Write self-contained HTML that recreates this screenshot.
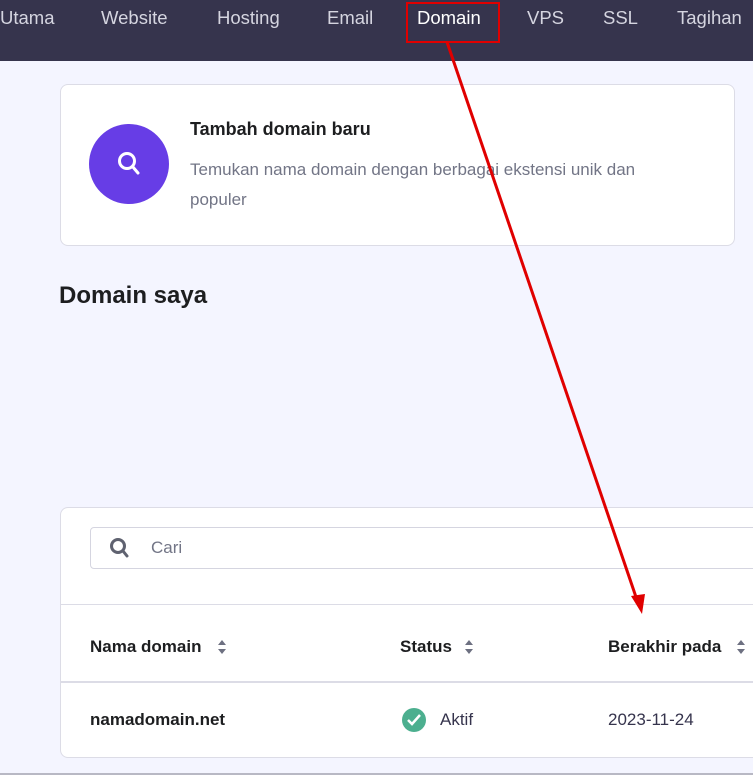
<!DOCTYPE html><html><head><style>
body{margin:0;width:753px;height:775px;background:#f4f5ff;font-family:"Liberation Sans",sans-serif;position:relative;overflow:hidden}
.nav{position:absolute;left:0;top:0;width:753px;height:61px;background:#36344d}
.nav span{position:absolute;top:7px;font-size:18.5px;color:#d5d5e0}
.abs{position:absolute}
</style></head><body>
<div class="nav">
<span style="left:0">Utama</span><span style="left:101px">Website</span><span style="left:217px">Hosting</span><span style="left:327px">Email</span><span style="left:417px;color:#fff">Domain</span><span style="left:527px">VPS</span><span style="left:603px">SSL</span><span style="left:677px">Tagihan</span>
</div>
<div class="abs" style="left:406px;top:2px;width:90px;height:37px;border:2px solid #e00000"></div>
<div class="abs" style="left:60px;top:84px;width:673px;height:160px;background:#fff;border:1px solid #dcdce6;border-radius:8px"></div>
<div class="abs" style="left:89px;top:124px;width:80px;height:80px;border-radius:50%;background:#673de6"></div>
<svg class="abs" style="left:111px;top:146px" width="36" height="36" viewBox="0 0 36 36"><circle cx="16" cy="15" r="7.5" fill="none" stroke="#fff" stroke-width="3"/><line x1="21.5" y1="20.5" x2="27" y2="27" stroke="#fff" stroke-width="3" stroke-linecap="round"/></svg>
<div class="abs" style="left:190px;top:119px;font-size:18px;font-weight:bold;color:#1d1e20">Tambah domain baru</div>
<div class="abs" style="left:190px;top:155px;width:490px;font-size:17px;line-height:30px;color:#727586">Temukan nama domain dengan berbagai ekstensi unik dan populer</div>
<div class="abs" style="left:59px;top:282px;font-size:24px;font-weight:bold;color:#1d1e20">Domain saya</div>
<div class="abs" style="left:60px;top:507px;width:700px;height:249px;background:#fff;border:1px solid #dcdce6;border-radius:8px"></div>
<div class="abs" style="left:90px;top:527px;width:680px;height:40px;border:1px solid #d5d5e0;border-radius:4px"></div>
<svg class="abs" style="left:107px;top:535px" width="26" height="26" viewBox="0 0 26 26"><circle cx="11" cy="11" r="6.5" fill="none" stroke="#5f6270" stroke-width="3"/><line x1="16" y1="16" x2="20" y2="21" stroke="#5f6270" stroke-width="3" stroke-linecap="round"/></svg>
<div class="abs" style="left:151px;top:538px;font-size:17px;color:#727586">Cari</div>
<div class="abs" style="left:61px;top:604px;width:700px;height:1px;background:#dcdce6"></div>
<div class="abs" style="left:61px;top:681px;width:700px;height:2px;background:#dcdce6"></div>
<div class="abs" style="left:90px;top:637px;font-size:17px;font-weight:bold;color:#1d1e20">Nama domain</div>
<div class="abs" style="left:400px;top:637px;font-size:17px;font-weight:bold;color:#1d1e20">Status</div>
<div class="abs" style="left:608px;top:637px;font-size:17px;font-weight:bold;color:#1d1e20">Berakhir pada</div>
<svg class="abs" style="left:217px;top:639px" width="10" height="16"><path d="M1 6L5 1 9 6Z M1 10L5 15 9 10Z" fill="#6d7081"/></svg>
<svg class="abs" style="left:464px;top:639px" width="10" height="16"><path d="M1 6L5 1 9 6Z M1 10L5 15 9 10Z" fill="#6d7081"/></svg>
<svg class="abs" style="left:736px;top:639px" width="10" height="16"><path d="M1 6L5 1 9 6Z M1 10L5 15 9 10Z" fill="#6d7081"/></svg>
<div class="abs" style="left:90px;top:710px;font-size:17px;font-weight:bold;color:#1d1e20">namadomain.net</div>
<svg class="abs" style="left:401px;top:707px" width="26" height="26"><circle cx="13" cy="13" r="12" fill="#4caf8f"/><path d="M7 13l4 4 8-9" fill="none" stroke="#fff" stroke-width="2.5"/></svg>
<div class="abs" style="left:440px;top:710px;font-size:17px;color:#36344d">Aktif</div>
<div class="abs" style="left:608px;top:710px;font-size:17px;color:#36344d">2023-11-24</div>
<div class="abs" style="left:0;top:773px;width:753px;height:2px;background:#b8b8c4"></div>
<svg class="abs" style="left:0;top:0" width="753" height="775"><line x1="447" y1="42" x2="637" y2="600" stroke="#e00000" stroke-width="3"/><path d="M631 596L645 594 642 614Z" fill="#e00000"/></svg>
</body></html>
